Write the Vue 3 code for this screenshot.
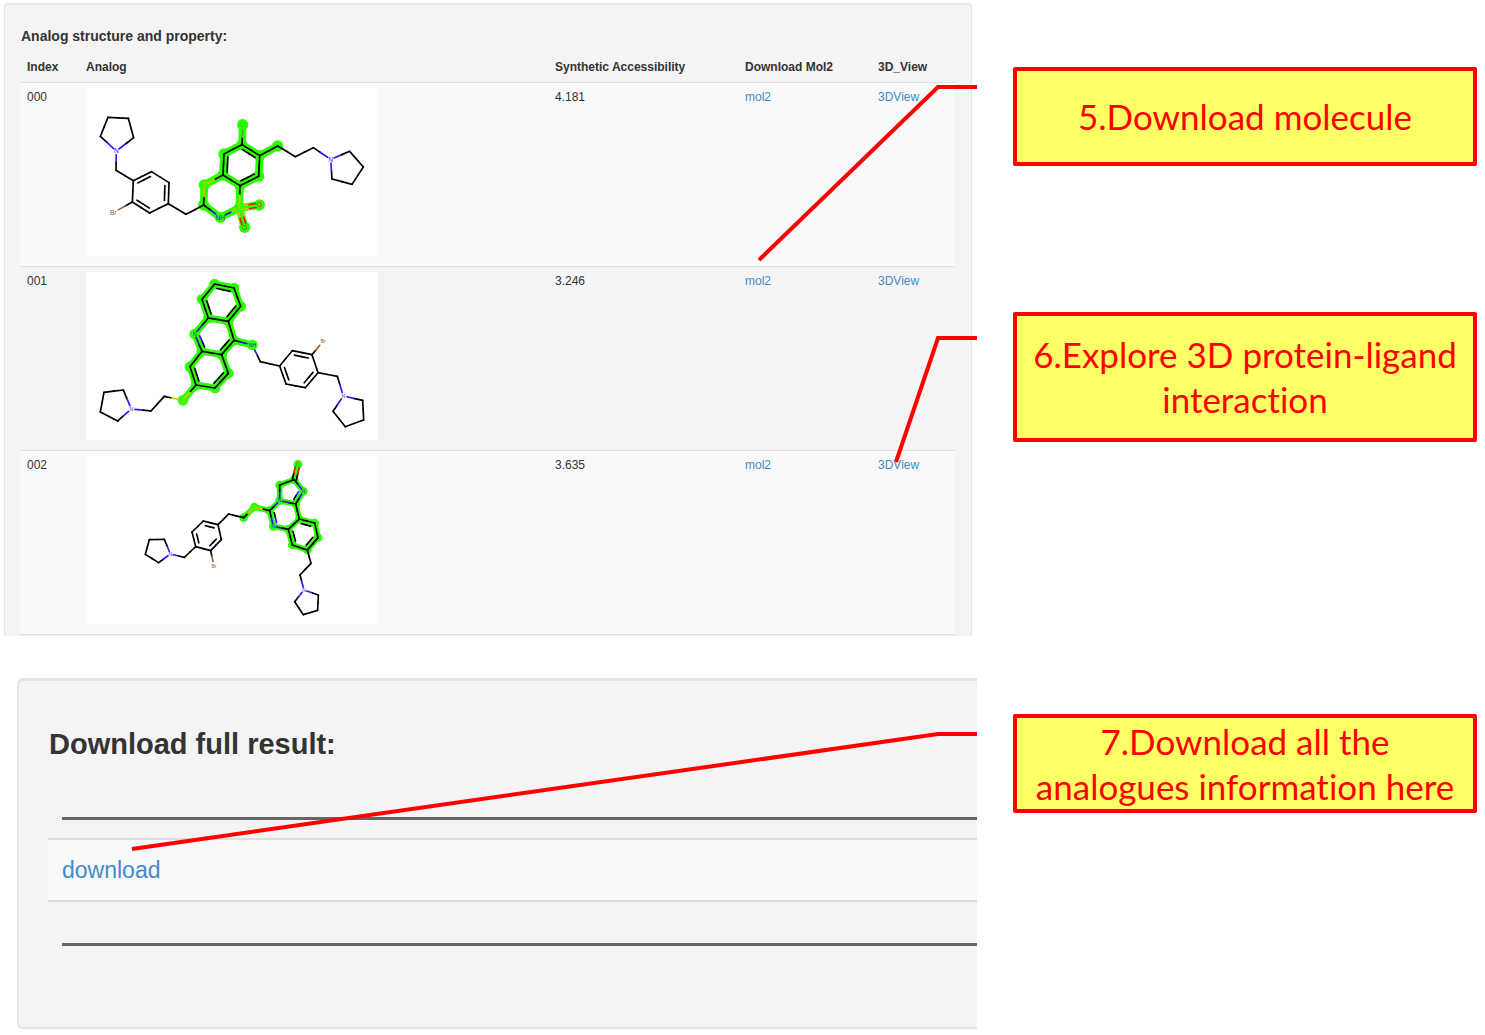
<script setup>
const colors = {
  C: '#000000',
  N: '#3a10ff',
  NH: '#2a18d8',
  S: '#d2c400',
  Cl: '#22c800',
  O: '#e62200',
  Br: '#a0622d',
}

// Atoms are [x, y, element]; bonds are [from, to, order]; rings orient the inner line of double bonds.
const sources = [
  {
    index: '000',
    score: '4.181',
    view: '0 6 876 504',
    font: 20,
    glow: 23,
    dot: 17,
    inset: 11,
    atoms: [
      [91, 195, 'N'], [143, 155], [127, 97], [66, 94], [43, 151], [90, 253],
      [142, 284], [196, 257], [249, 290], [247, 353], [191, 381], [139, 348],
      [82, 380, 'Br'], [300, 385], [353, 357], [355, 297, 'S'], [411, 267],
      [462, 299], [460, 366, 'S'], [403, 394, 'NH'], [414, 204], [468, 176],
      [521, 209], [518, 271], [470, 116, 'Cl'], [520, 357, 'O'], [476, 424, 'O'],
      [575, 180], [628, 212], [682, 185], [734, 220, 'N'], [791, 196],
      [832, 243], [798, 295], [738, 279],
    ],
    bonds: [
      [0, 1], [1, 2], [2, 3], [3, 4], [4, 0], [0, 5], [5, 6], [6, 7, 2], [7, 8],
      [8, 9, 2], [9, 10], [10, 11, 2], [11, 6], [11, 12], [9, 13], [13, 14],
      [14, 15], [15, 16], [16, 17], [17, 18], [18, 19], [19, 14], [16, 20, 2],
      [20, 21], [21, 22, 2], [22, 23], [23, 17, 2], [21, 24], [18, 25, 2],
      [18, 26, 2], [22, 27], [27, 28], [28, 29], [29, 30], [30, 31], [31, 32],
      [32, 33], [33, 34], [34, 30],
    ],
    rings: [[6, 7, 8, 9, 10, 11], [16, 20, 21, 22, 23, 17]],
    lit: [14, 15, 16, 17, 18, 19, 20, 21, 22, 23, 24, 25, 26, 27],
  },
  {
    index: '001',
    score: '3.246',
    view: '0 6 876 504',
    font: 16,
    glow: 21,
    dot: 16,
    inset: 11,
    atoms: [
      [136, 417, 'N'], [112, 360], [54, 367], [43, 426], [95, 453], [195, 423],
      [235, 379], [291, 391, 'S'], [330, 345], [312, 290], [348, 244],
      [407, 254], [427, 310], [387, 354], [326, 192, 'N'], [367, 144],
      [427, 154], [444, 211], [348, 88], [386, 42], [444, 54], [464, 109],
      [499, 225, 'NH'], [523, 275], [581, 288], [619, 242], [678, 254],
      [696, 308], [658, 353], [600, 342], [712, 213, 'Br'], [754, 319],
      [772, 378, 'N'], [830, 391], [833, 450], [778, 470], [741, 424],
    ],
    bonds: [
      [0, 1], [1, 2], [2, 3], [3, 4], [4, 0], [0, 5], [5, 6], [6, 7], [7, 8],
      [8, 9, 2], [9, 10], [10, 11], [11, 12], [12, 13, 2], [13, 8],
      [10, 14, 2], [14, 15], [15, 16], [16, 17], [17, 11, 2], [15, 18, 2],
      [18, 19], [19, 20, 2], [20, 21], [21, 16, 2], [17, 22], [22, 23],
      [23, 24], [24, 25], [25, 26, 2], [26, 27], [27, 28, 2], [28, 29],
      [29, 24, 2], [26, 30], [27, 31], [31, 32], [32, 33], [33, 34], [34, 35],
      [35, 36], [36, 32],
    ],
    rings: [
      [8, 9, 10, 11, 12, 13], [10, 14, 15, 16, 17, 11],
      [15, 18, 19, 20, 21, 16], [24, 25, 26, 27, 28, 29],
    ],
    lit: [7, 8, 9, 10, 11, 12, 13, 14, 15, 16, 17, 18, 19, 20, 21, 22],
  },
  {
    index: '002',
    score: '3.635',
    view: '0 3 876 504',
    font: 15,
    glow: 17,
    dot: 13,
    inset: 9,
    atoms: [
      [253, 297, 'N'], [235, 253], [190, 254], [178, 298], [218, 323],
      [295, 307], [329, 275], [318, 231], [352, 198], [396, 209], [406, 254],
      [374, 287], [384, 334, 'Br'], [428, 177], [473, 188], [505, 156, 'S'],
      [551, 167], [562, 214, 'N'], [607, 223], [640, 192], [629, 147],
      [581, 137, 'N'], [581, 90], [625, 74], [652, 109, 'N'], [636, 28, 'O'],
      [686, 204], [696, 248], [664, 285], [619, 270], [675, 325], [642, 360],
      [654, 405, 'N'], [697, 420], [695, 466], [652, 479], [626, 440],
    ],
    bonds: [
      [0, 1], [1, 2], [2, 3], [3, 4], [4, 0], [0, 5], [5, 6], [6, 7, 2],
      [7, 8], [8, 9, 2], [9, 10], [10, 11, 2], [11, 6], [11, 12], [9, 13],
      [13, 14], [14, 15], [15, 16], [16, 17, 2], [17, 18], [18, 19], [19, 20],
      [20, 21], [21, 16], [21, 22], [22, 23], [23, 24], [24, 20, 2],
      [23, 25, 2], [19, 26, 2], [26, 27], [27, 28, 2], [28, 29], [29, 18, 2],
      [28, 30], [30, 31], [31, 32], [32, 33], [33, 34], [34, 35], [35, 36],
      [36, 32],
    ],
    rings: [
      [6, 7, 8, 9, 10, 11], [16, 17, 18, 19, 20, 21],
      [20, 21, 22, 23, 24], [18, 19, 26, 27, 28, 29],
    ],
    lit: [14, 15, 16, 17, 18, 19, 20, 21, 22, 23, 24, 25, 26, 27, 28, 29],
  },
]

function build(mol) {
  const atoms = mol.atoms.map(([x, y, el = 'C']) => ({ x, y, el }))
  const strokes = []
  const glows = []

  const gap = (atom, trim) => {
    if (atom.el === 'C') return trim
    return atom.el.length > 1 ? mol.inset + 6 : mol.inset
  }

  // Each bond is drawn as two halves, one in the colour of either end.
  const draw = (a, b, dx, dy, trim) => {
    const length = Math.hypot(b.x - a.x, b.y - a.y)
    const ux = (b.x - a.x) / length
    const uy = (b.y - a.y) / length
    const ta = gap(a, trim)
    const tb = gap(b, trim)
    const x1 = a.x + ux * ta + dx
    const y1 = a.y + uy * ta + dy
    const x2 = b.x - ux * tb + dx
    const y2 = b.y - uy * tb + dy
    const mx = (x1 + x2) / 2
    const my = (y1 + y2) / 2
    strokes.push({ x1, y1, x2: mx, y2: my, color: colors[a.el] })
    strokes.push({ x1: mx, y1: my, x2, y2, color: colors[b.el] })
  }

  for (const [i, j, order] of mol.bonds) {
    const a = atoms[i]
    const b = atoms[j]
    if (mol.lit.includes(i) && mol.lit.includes(j)) {
      glows.push({ x1: a.x, y1: a.y, x2: b.x, y2: b.y })
    }
    const length = Math.hypot(b.x - a.x, b.y - a.y)
    const nx = -(b.y - a.y) / length
    const ny = (b.x - a.x) / length
    if (order !== 2) {
      draw(a, b, 0, 0, 0)
      continue
    }
    const ring = mol.rings.find((r) => r.includes(i) && r.includes(j))
    if (!ring) {
      draw(a, b, nx * 6, ny * 6, 0)
      draw(a, b, -nx * 6, -ny * 6, 0)
      continue
    }
    const cx = ring.reduce((sum, k) => sum + atoms[k].x, 0) / ring.length
    const cy = ring.reduce((sum, k) => sum + atoms[k].y, 0) / ring.length
    const side = (cx - a.x) * nx + (cy - a.y) * ny > 0 ? 12 : -12
    draw(a, b, 0, 0, 0)
    draw(a, b, nx * side, ny * side, 9)
  }

  return {
    ...mol,
    strokes,
    glows,
    dots: mol.lit.map((i) => atoms[i]),
    labels: atoms.filter((atom) => atom.el !== 'C'),
  }
}

const analogs = sources.map(build)
</script>

<template>
  <main class="page">
    <div class="results">
      <section class="panel analogs">
        <h2 class="title">Analog structure and property:</h2>
        <table class="grid">
          <colgroup>
            <col class="col-index" />
            <col />
            <col class="col-score" />
            <col class="col-mol" />
            <col class="col-view" />
          </colgroup>
          <thead>
            <tr>
              <th scope="col">Index</th>
              <th scope="col">Analog</th>
              <th scope="col">Synthetic Accessibility</th>
              <th scope="col">Download Mol2</th>
              <th scope="col">3D_View</th>
            </tr>
          </thead>
          <tbody>
            <tr v-for="m in analogs" :key="m.index">
              <td>{{ m.index }}</td>
              <td>
                <svg class="molecule" :viewBox="m.view" role="img">
                  <g class="glow">
                    <line
                      v-for="(g, i) in m.glows" :key="i"
                      :x1="g.x1" :y1="g.y1" :x2="g.x2" :y2="g.y2"
                      :stroke-width="m.glow"
                    />
                    <circle v-for="(d, i) in m.dots" :key="i" :cx="d.x" :cy="d.y" :r="m.dot" />
                  </g>
                  <g class="bonds">
                    <line
                      v-for="(s, i) in m.strokes" :key="i"
                      :x1="s.x1" :y1="s.y1" :x2="s.x2" :y2="s.y2" :stroke="s.color"
                    />
                  </g>
                  <text
                    v-for="(a, i) in m.labels" :key="i"
                    class="atom" :x="a.x" :y="a.y + m.font * 0.36"
                    :font-size="m.font" :fill="colors[a.el]"
                  >{{ a.el }}</text>
                </svg>
              </td>
              <td>{{ m.score }}</td>
              <td><a href="#">mol2</a></td>
              <td><a href="#">3DView</a></td>
            </tr>
          </tbody>
        </table>
      </section>

      <section class="panel download">
        <h2 class="download-title">Download full result:</h2>
        <hr class="rule" />
        <div class="download-row"><a href="#">download</a></div>
        <hr class="rule" />
      </section>

      <svg class="connectors" viewBox="0 0 977 1035" preserveAspectRatio="none" aria-hidden="true">
        <polyline points="759,260 938,87 977,87" />
        <polyline points="896,462 938,338 977,338" />
        <polyline points="132,849 938,734 977,734" />
      </svg>
    </div>

    <aside class="notes">
      <p class="note">5.Download molecule</p>
      <p class="note note-explore">6.Explore 3D protein-ligand interaction</p>
      <p class="note note-all">7.Download all the analogues information here</p>
    </aside>
  </main>
</template>

<style>
body {
  margin: 0;
  background: #fff;
}
</style>

<style scoped>
.page {
  display: grid;
  grid-template-columns: minmax(0, 977fr) minmax(0, 508fr);
  font-family: "Liberation Sans", Arial, sans-serif;
  color: #333;
}

.results {
  position: relative;
  padding: 3px 0 6px;
}

.panel {
  box-sizing: border-box;
  background: #f4f4f4;
  border: 1px solid #e6e6e6;
}

a {
  color: #428bca;
  text-decoration: none;
}

.analogs {
  margin: 0 5px 0 4px;
  padding: 22px 16px 1px 15px;
  border-top: 2px solid #ebebeb;
  border-bottom: 0;
  border-radius: 4px 4px 0 0;
}

.title {
  margin: 0 0 12px;
  padding-left: 1px;
  font-size: 14px;
  line-height: 18px;
}

.grid {
  width: 100%;
  table-layout: fixed;
  border-spacing: 0;
  font-size: 12px;
  line-height: 19px;
}

.col-index {
  width: 59px;
}

.col-score {
  width: 190px;
}

.col-mol {
  width: 133px;
}

.col-view {
  width: 84px;
}

.grid th {
  padding: 1px 7px 5px;
  text-align: left;
  white-space: nowrap;
}

.grid td {
  padding: 5px 7px 10px;
  border-top: 1px solid #ddd;
  vertical-align: top;
}

.grid tbody tr:nth-child(odd) td {
  background: #f9f9f9;
}

.grid tbody tr:last-child td {
  border-bottom: 1px solid #ddd;
}

.molecule {
  display: block;
  width: 292px;
  height: 168px;
  background: #fff;
}

.glow {
  stroke: #2bff00;
  stroke-linecap: round;
  fill: #2bff00;
}

.glow circle {
  stroke: none;
}

.bonds {
  stroke-width: 5px;
  stroke-linecap: round;
}

.atom {
  text-anchor: middle;
}

.download {
  margin: 42px 0 0 17px;
  padding: 43px 0 81px 29px;
  border: 2px solid #e4e4e4;
  border-top-width: 3px;
  border-right: 0;
  border-radius: 6px 0 0 6px;
}

.download-title {
  margin: 0;
  padding-left: 1px;
  font-size: 29px;
  line-height: 40px;
}

.rule {
  height: 3px;
  margin: 53px 0 18px 14px;
  border: 0;
  background: #666;
}

.download-row {
  padding: 14px;
  border: solid #ddd;
  border-width: 2px 0;
  background: #f9f9f9;
  font-size: 23px;
  line-height: 32px;
}

.download-row + .rule {
  margin: 41px 0 0 14px;
}

.connectors {
  position: absolute;
  inset: 0;
  width: 100%;
  height: 100%;
  fill: none;
  stroke: #f00;
  stroke-width: 4px;
  pointer-events: none;
}

.notes {
  padding: 67px 8px 0 36px;
}

.note {
  display: flex;
  align-items: center;
  justify-content: center;
  box-sizing: border-box;
  min-height: 99px;
  margin: 0;
  padding: 0 12px;
  border: 4px solid #f00;
  border-radius: 2px;
  background: #ffff66;
  color: #f00;
  font-family: Lato, Carlito, Calibri, sans-serif;
  font-size: 35px;
  font-variant-ligatures: none;
  line-height: 45px;
  text-align: center;
}

.note-explore {
  min-height: 130px;
  margin-top: 146px;
}

.note-all {
  margin-top: 272px;
}
</style>
